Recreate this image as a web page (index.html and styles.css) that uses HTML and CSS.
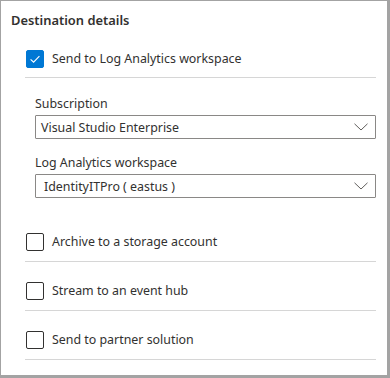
FILE: index.html
```html
<!DOCTYPE html>
<html lang="en">
<head>
    <meta charset="UTF-8">
    <meta name="viewport" content="width=device-width, initial-scale=1.0">
    <title>Destination details</title>
    <link rel="stylesheet" href="styles.css">
</head>
<body>
    <div class="panel">
        <h2 class="panel-title">Destination details</h2>

        <div class="options">
            <div class="option option-first">
                <span class="checkbox checked">
                    <svg width="18" height="18" viewBox="0 0 18 18">
                        <path d="M4.6 9.3 L7.6 12.2 L13.4 6.2" fill="none" stroke="#ffffff" stroke-width="1.1"/>
                    </svg>
                </span>
                <span class="option-label">Send to Log Analytics workspace</span>
            </div>

            <div class="sub-section">
                <div class="field">
                    <div class="field-label">Subscription</div>
                    <div class="select">
                        <span class="select-value">Visual Studio Enterprise</span>
                        <svg class="chevron" width="14" height="8" viewBox="0 0 14 8">
                            <path d="M0.5 0.8 L7 7 L13.5 0.8" fill="none" stroke="#605e5c" stroke-width="1"/>
                        </svg>
                    </div>
                </div>
                <div class="field">
                    <div class="field-label">Log Analytics workspace</div>
                    <div class="select">
                        <span class="select-value indent">IdentityITPro ( eastus )</span>
                        <svg class="chevron" width="14" height="8" viewBox="0 0 14 8">
                            <path d="M0.5 0.8 L7 7 L13.5 0.8" fill="none" stroke="#605e5c" stroke-width="1"/>
                        </svg>
                    </div>
                </div>
            </div>

            <div class="option">
                <span class="checkbox"></span>
                <span class="option-label">Archive to a storage account</span>
            </div>
            <div class="option">
                <span class="checkbox"></span>
                <span class="option-label">Stream to an event hub</span>
            </div>
            <div class="option">
                <span class="checkbox"></span>
                <span class="option-label">Send to partner solution</span>
            </div>
        </div>
    </div>
</body>
</html>
```

FILE: styles.css
```css
* {
    margin: 0;
    padding: 0;
    box-sizing: border-box;
}

body {
    font-family: "Noto Sans", "Liberation Sans", sans-serif;
    font-size: 12.4px;
    color: #323130;
    background: #ffffff;
}

.panel {
    width: 390px;
    height: 378px;
    border-style: solid;
    border-color: #a3a3a3;
    border-width: 1px 3px 3px 1px;
    padding: 0 11px 0 10px;
    background: #ffffff;
}

.panel-title {
    font-size: 12.9px;
    font-weight: 600;
    line-height: 20px;
    margin-top: 9px;
    color: #323130;
}

.options {
    margin-left: 14px;
}

.option {
    display: flex;
    align-items: center;
    gap: 8px;
    padding: 20px 0 10px 1px;
    border-bottom: 1px solid #d6d6d6;
}

.option-first {
    padding: 20px 0 9px 1px;
}

.option-label {
    line-height: 18px;
}

.checkbox {
    width: 18px;
    height: 18px;
    border: 1px solid #323130;
    border-radius: 2px;
    flex-shrink: 0;
    display: flex;
}

.checkbox.checked {
    background: #0078d4;
    border-color: #0078d4;
}

.checkbox.checked svg {
    margin: -1px;
}

.sub-section {
    padding: 17px 0 15px 10px;
}

.field + .field {
    margin-top: 15px;
}

.field-label {
    line-height: 18px;
    margin-bottom: 2px;
}

.select {
    height: 24px;
    border: 1px solid #8a8886;
    border-radius: 1px;
    display: flex;
    align-items: center;
    justify-content: space-between;
    padding: 0 7px 0 5px;
}

.select-value.indent {
    padding-left: 3px;
}

.chevron {
    display: block;
}
```
